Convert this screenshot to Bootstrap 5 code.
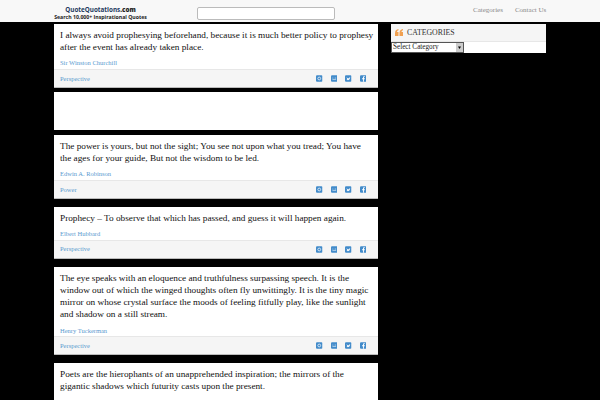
<!DOCTYPE html>
<html lang="en">
<head>
    <meta charset="UTF-8">
    <meta name="viewport" content="width=device-width, initial-scale=1.0">
    <title>Prophecy Quotes</title>
    <link href="https://cdn.jsdelivr.net/npm/bootstrap@5.3.0/dist/css/bootstrap.min.css" rel="stylesheet">
    <style>
        html, body { height: 400px; overflow: hidden; }
        body { background: #000; font-family: "Liberation Serif", serif; font-size: 9px; color: #333; }
        .top-bar { height: 22px; background: #f8f8f8; padding-left: 54px; }
        .logo-box { width: 93px; text-align: center; font-family: "Open Sans", sans-serif; font-weight: 700; white-space: nowrap; }
        .logo-name { font-size: 6.3px; color: #23395d; line-height: 8px; margin-top: 6px; }
        .logo-name b { color: #222; }
        .logo-sub { font-size: 5.2px; color: #222; line-height: 6px; }
        .search-box { width: 138px; height: 13px; margin: 7px 0 0 50px; background: #fff; border: 1px solid #bbb; border-radius: 2px; }
        .top-links { margin-left: 138px; gap: 12px; font-size: 7px; color: #888; padding-top: 6px; line-height: 9px; }
        .page-wrap { padding: 2px 0 0 54px; gap: 13px; }
        .quote-col { width: 324px; }
        .quote-box { background: #fff; margin-bottom: 8px; border-bottom: 1px solid #bbb; }
        .quote-box.first-box { margin-bottom: 4px; }
        .quote-text { font-size: 9.25px; line-height: 12.2px; color: #111; padding: 5px 4px 0 6px; margin: 0; }
        .quote-by { font-size: 6.5px; color: #5a9acf; padding: 6px 6px 0; height: 15.6px; line-height: 8px; }
        .quote-foot { height: 18px; background: #f5f5f5; border-top: 1px solid #e7e7e7; padding: 0 12px 0 6px; font-size: 6.5px; color: #5a9acf; }
        .share-set { gap: 8px; }
        .share-set svg { display: block; width: 6.5px; height: 7px; }
        .blank-box { height: 38px; background: #fff; margin-bottom: 5px; }
        .side-col { width: 155px; }
        .side-box { background: #fff; height: 29px; }
        .side-head { height: 18px; background: #f5f5f5; border-bottom: 1px solid #e7e7e7; padding: 3px 0 0 4px; font-size: 7.8px; color: #333; gap: 4px; line-height: 12px; }
        .side-mark { display: block; width: 8px; height: 7px; margin-top: 2px; }
        .side-select { appearance: none; width: 73px; height: 11px; font-size: 7.2px; line-height: 9px; font-family: "Liberation Serif", serif; padding: 0 0 0 1px; display: block; color: #222; background: #fff url("data:image/svg+xml,%3Csvg xmlns='http://www.w3.org/2000/svg' width='7' height='9'%3E%3Crect width='7' height='9' fill='%23ccc'/%3E%3Cpath d='M2 3.5h3L3.5 6z' fill='%23000'/%3E%3C/svg%3E") no-repeat right center; border: 1px solid #555; border-radius: 0; }
    </style>
</head>
<body>
    <nav class="top-bar d-flex">
        <div class="logo-box">
            <div class="logo-name">QuoteQuotations<b>.com</b></div>
            <div class="logo-sub">Search 10,000+ Inspirational Quotes</div>
        </div>
        <div class="search-box"></div>
        <div class="top-links d-flex">
            <span>Categories</span>
            <span>Contact Us</span>
        </div>
    </nav>

    <!-- same four share icons under every quote -->
    <svg class="d-none">
        <symbol id="ico-pin" viewBox="0 0 7 7"><rect width="7" height="7" rx="1.2" fill="#428bca"/><circle cx="3.5" cy="3.5" r="1.5" fill="none" stroke="#fff" stroke-width=".8"/></symbol>
        <symbol id="ico-in" viewBox="0 0 7 7"><rect width="7" height="7" rx="1.2" fill="#428bca"/><path d="M1.5 3h1M4 3h1.5M1.5 4.5h4" stroke="#cfe2f3" stroke-width=".8"/></symbol>
        <symbol id="ico-tw" viewBox="0 0 7 7"><rect width="7" height="7" rx="1.2" fill="#428bca"/><path d="M1.5 2.2 3.5 3.4 5.6 2 5 4.2 3.3 5.3 1.6 4.9 2.6 4.2z" fill="#fff"/></symbol>
        <symbol id="ico-fb" viewBox="0 0 7 7"><rect width="7" height="7" rx="1.2" fill="#428bca"/><path d="M4.2 7V4.2h1V3.2h-1v-.7q0-.5.5-.5h.5V1h-.9q-1.1 0-1.1 1.2v1H2.2v1h1V7z" fill="#fff"/></symbol>
    </svg>

    <div class="page-wrap d-flex align-items-start">
        <div class="quote-col">
            <div class="quote-box first-box">
                <p class="quote-text">I always avoid prophesying beforehand, because it is much better policy to prophesy after the event has already taken place.</p>
                <div class="quote-by">Sir Winston Churchill</div>
                <div class="quote-foot d-flex justify-content-between align-items-center">
                    <span>Perspective</span>
                    <div class="share-set d-flex"><svg><use href="#ico-pin"/></svg><svg><use href="#ico-in"/></svg><svg><use href="#ico-tw"/></svg><svg><use href="#ico-fb"/></svg></div>
                </div>
            </div>

            <div class="blank-box"></div>

            <div class="quote-box">
                <p class="quote-text">The power is yours, but not the sight; You see not upon what you tread; You have the ages for your guide, But not the wisdom to be led.</p>
                <div class="quote-by">Edwin A. Robinson</div>
                <div class="quote-foot d-flex justify-content-between align-items-center">
                    <span>Power</span>
                    <div class="share-set d-flex"><svg><use href="#ico-pin"/></svg><svg><use href="#ico-in"/></svg><svg><use href="#ico-tw"/></svg><svg><use href="#ico-fb"/></svg></div>
                </div>
            </div>

            <div class="quote-box">
                <p class="quote-text">Prophecy – To observe that which has passed, and guess it will happen again.</p>
                <div class="quote-by">Elbert Hubbard</div>
                <div class="quote-foot d-flex justify-content-between align-items-center">
                    <span>Perspective</span>
                    <div class="share-set d-flex"><svg><use href="#ico-pin"/></svg><svg><use href="#ico-in"/></svg><svg><use href="#ico-tw"/></svg><svg><use href="#ico-fb"/></svg></div>
                </div>
            </div>

            <div class="quote-box">
                <p class="quote-text">The eye speaks with an eloquence and truthfulness surpassing speech. It is the window out of which the winged thoughts often fly unwittingly. It is the tiny magic mirror on whose crystal surface the moods of feeling fitfully play, like the sunlight and shadow on a still stream.</p>
                <div class="quote-by">Henry Tuckerman</div>
                <div class="quote-foot d-flex justify-content-between align-items-center">
                    <span>Perspective</span>
                    <div class="share-set d-flex"><svg><use href="#ico-pin"/></svg><svg><use href="#ico-in"/></svg><svg><use href="#ico-tw"/></svg><svg><use href="#ico-fb"/></svg></div>
                </div>
            </div>

            <div class="quote-box">
                <p class="quote-text">Poets are the hierophants of an unapprehended inspiration; the mirrors of the gigantic shadows which futurity casts upon the present.</p>
                <div class="quote-by">Percy Bysshe Shelley</div>
            </div>
        </div>

        <aside class="side-col">
            <div class="side-box">
                <div class="side-head d-flex">
                    <svg class="side-mark" viewBox="0 0 16 14"><path d="M0 8.5C0 3.5 2.5.8 7 0v2.5C5 3 4 4.2 4 6h3v8H0zM9 8.5C9 3.5 11.500.8 16 0v2.5C14 3 13 4.200 13 6h3v8H9z" fill="#f0a050"/></svg>
                    <span>CATEGORIES</span>
                </div>
                <select class="side-select"><option>Select Category</option></select>
            </div>
        </aside>
    </div>

    <script src="https://cdn.jsdelivr.net/npm/bootstrap@5.3.0/dist/js/bootstrap.bundle.min.js"></script>
</body>
</html>
